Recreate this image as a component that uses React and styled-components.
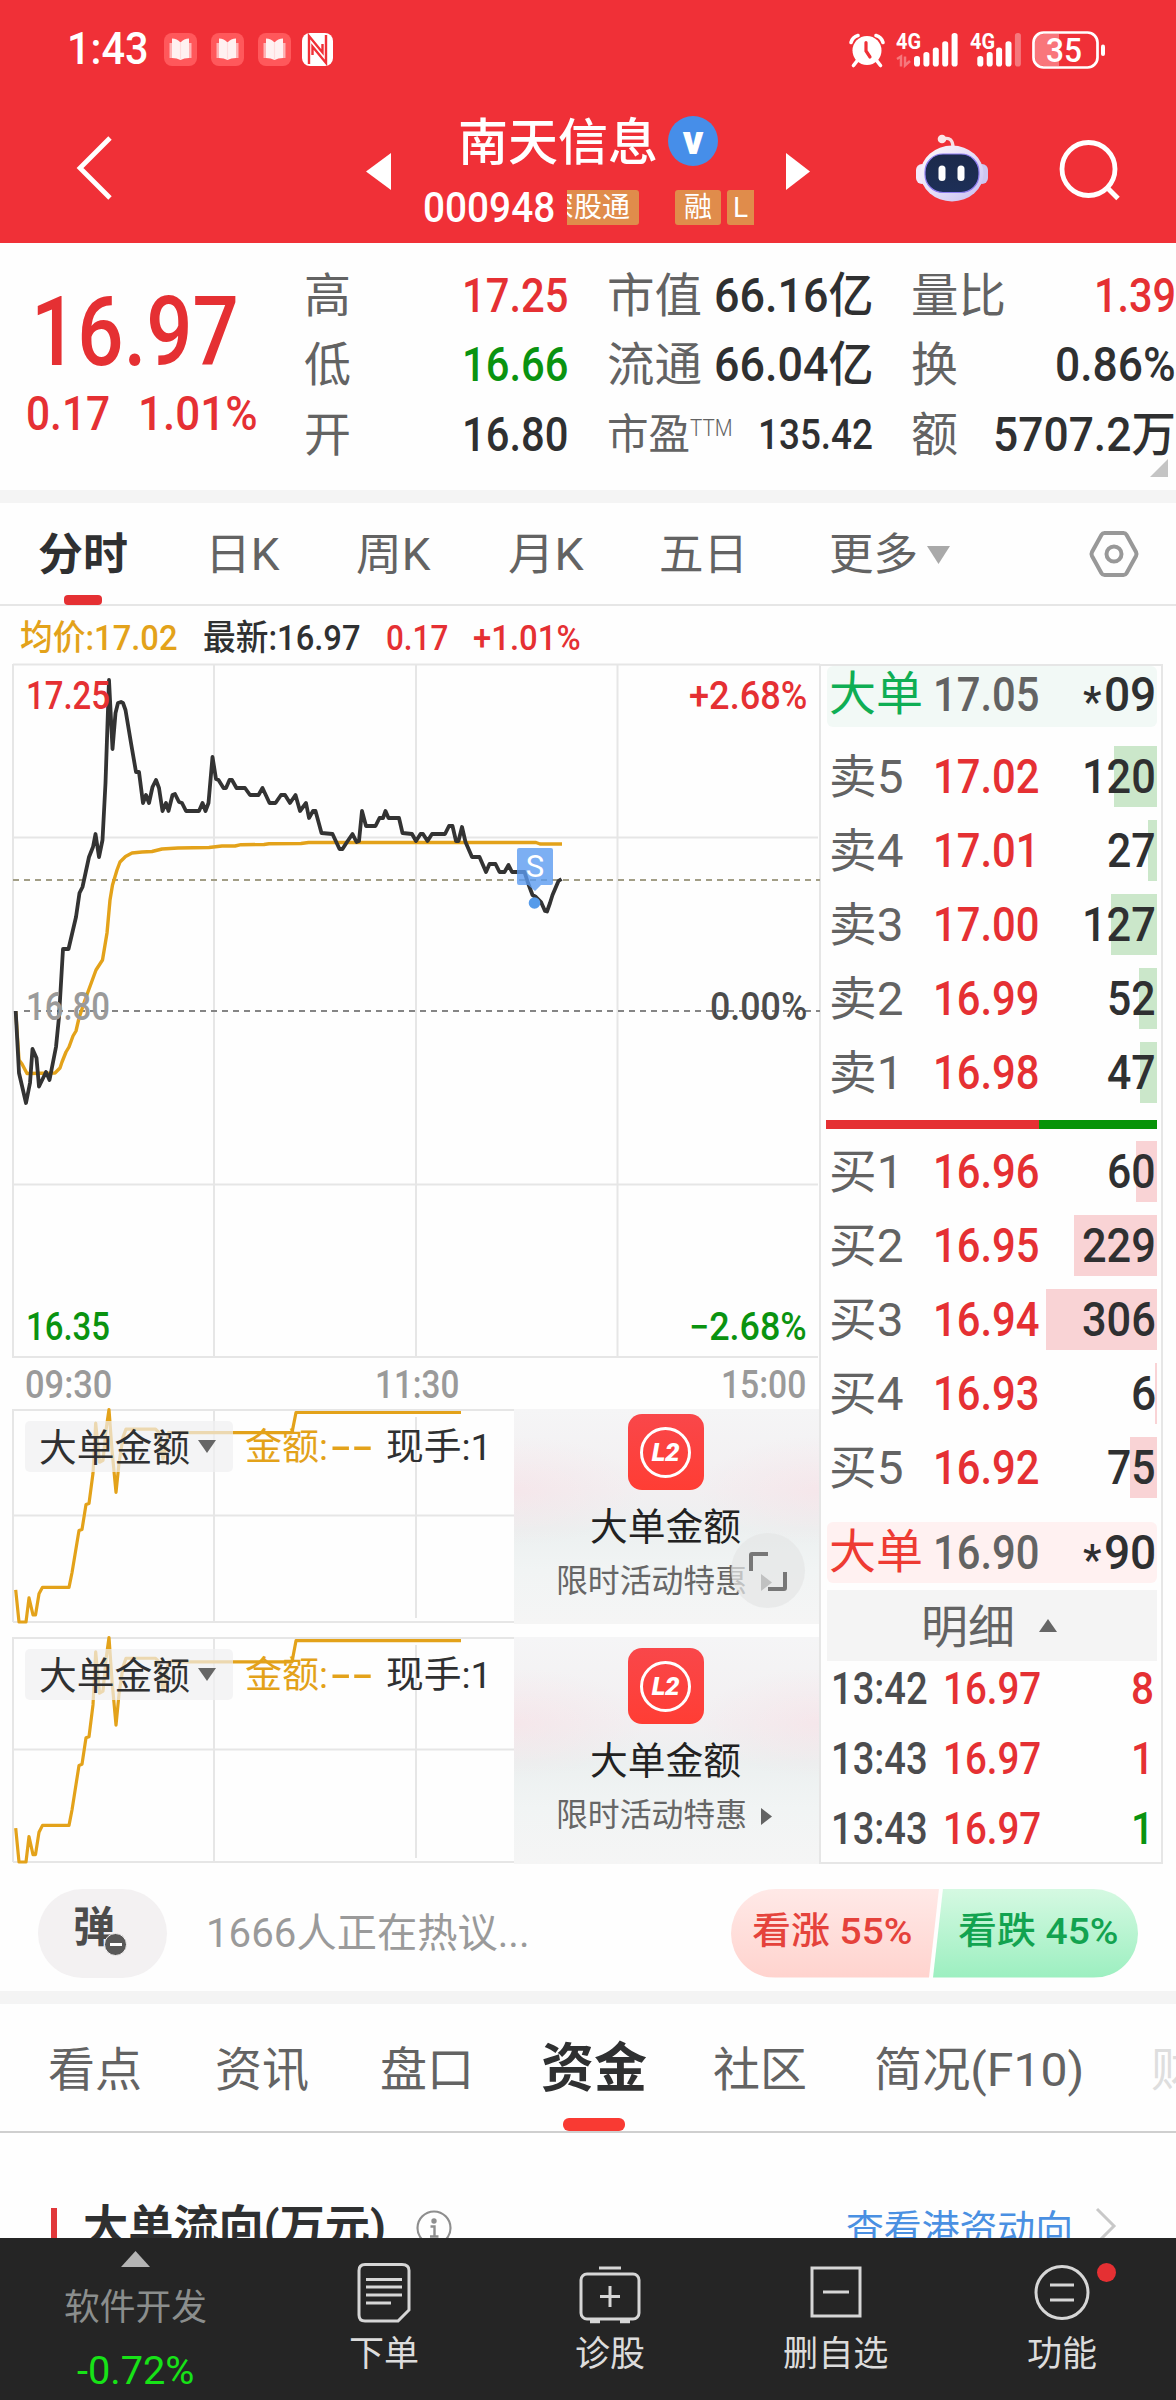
import React, { useLayoutEffect, useRef, useState } from "react";
import styled, { createGlobalStyle, css } from "styled-components";

const color = {
  brand: "#f03037",
  red: "#e53033",
  green: "#0a9310",
  gold: "#e3a21a",
  ink: "#2f3031",
  label: "#636363",
  muted: "#9a9a9a",
  line: "#e6e6e6",
  band: "#f4f4f4",
};

const fontStack = `Roboto, "Noto Sans CJK SC", sans-serif`;

const GlobalStyle = createGlobalStyle`
  * { box-sizing: border-box; }
  body { margin: 0; background: #fefefe; }
`;

const Screen = styled.div`
  display: flex;
  flex-direction: column;
  width: 1176px;
  height: 2400px;
  overflow: hidden;
  background: #fefefe;
  color: ${color.ink};
  font-family: ${fontStack};
`;

/* ---------- text that is condensed to a given width ---------- */

const FitBox = styled.span`
  display: block;
  flex: none;
  width: ${(p) => p.$w}px;
  height: ${(p) => p.$size * 1.2}px;
  line-height: ${(p) => p.$size * 1.2}px;
  font-size: ${(p) => p.$size}px;
  font-weight: ${(p) => p.$weight};
  color: ${(p) => p.$color || "inherit"};
  white-space: nowrap;
  ${(p) => p.$top && css`margin-top: ${p.$top}px;`}
  ${(p) => p.$left && css`margin-left: ${p.$left}px;`}
`;

const FitInner = styled.span`
  display: inline-block;
  transform-origin: 0 50%;
`;

function Fit({ w, size, weight = 400, tint, top, left, children }) {
  const ref = useRef(null);
  const [scale, setScale] = useState(1);
  useLayoutEffect(() => {
    setScale(w / ref.current.offsetWidth);
  }, [w, size, weight, children]);
  return (
    <FitBox $w={w} $size={size} $weight={weight} $color={tint} $top={top} $left={left}>
      <FitInner ref={ref} style={{ transform: `scaleX(${scale})` }}>{children}</FitInner>
    </FitBox>
  );
}

/* ---------- header ---------- */

const Header = styled.header`
  flex: none;
  height: 243px;
  background: ${color.brand};
  color: #fff;
`;

const StatusBar = styled.div`
  display: flex;
  align-items: center;
  height: 99px;
  padding: 0 70px 0 67px;
`;

const StatusIcons = styled.div`
  display: flex;
  align-items: center;
  gap: 14px;
  margin-left: 15px;
`;

const StatusRight = styled.div`
  display: flex;
  align-items: center;
  margin-left: auto;
`;

const TitleBar = styled.div`
  display: flex;
  align-items: center;
  height: 144px;
  padding: 0 57px 0 75px;
`;

const StockTitle = styled.div`
  display: flex;
  flex-direction: column;
  width: 331px;
  height: 144px;
  margin: 0 32px;
`;

const NameRow = styled.div`
  display: flex;
  align-items: center;
  height: 82px;
  padding: 2px 0 0 35px;
`;

const CodeRow = styled.div`
  display: flex;
  align-items: center;
  height: 52px;
`;

const Verified = styled.span`
  display: flex;
  align-items: center;
  justify-content: center;
  width: 50px;
  height: 50px;
  margin-left: 10px;
  border-radius: 50%;
  background: #468ee9;
  font-size: 40px;
  line-height: 50px;
  font-weight: 900;
`;

const Tag = styled.span`
  display: flex;
  justify-content: ${(p) => p.$align || "center"};
  flex: none;
  width: ${(p) => p.$w}px;
  height: 35px;
  margin-left: ${(p) => p.$gap}px;
  padding: ${(p) => p.$pad || "0"};
  border-radius: ${(p) => p.$radius || "3px"};
  overflow: hidden;
  background: #e08c4b;
  font-size: 28px;
  line-height: 36px;
  white-space: nowrap;
`;

const Icon = styled.svg`
  display: block;
  flex: none;
  margin-left: ${(p) => p.$left || 0}px;
  margin-top: ${(p) => p.$top || 0}px;
  overflow: visible;
  font-family: ${fontStack};
`;

const BookIcon = () => (
  <Icon width="33" height="33" viewBox="0 0 33 33">
    <rect width="33" height="33" rx="8" fill="#ff585b" />
    <path d="M5.500 10h22v15h-22z" fill="#ffb3b5" />
    <path d="M8 5.500q5 0 8.500 4q3.500-4 8.500-4v19.500q-5 0-8.500 2q-3.500-2-8.500-2z" fill="#fff1f1" />
    <path d="M16.500 9.500v17" stroke="#ffdcdd" strokeWidth="1.200" />
  </Icon>
);

const NfcIcon = () => (
  <Icon width="31" height="33" viewBox="0 0 31 33" $left={-3}>
    <rect width="31" height="33" rx="8" fill="#fff" />
    <path d="M7 31V3L20.500 19.500V11" fill="none" stroke={color.brand} strokeWidth="2.400" />
    <path d="M24 2v28L10.500 13.500V22" fill="none" stroke={color.brand} strokeWidth="2.400" />
  </Icon>
);

const AlarmIcon = () => (
  <Icon width="36" height="34" viewBox="0 0 36 34">
    <circle cx="18" cy="17.500" r="14.500" fill="#fff" />
    <path d="M2 9.500Q3.500 4 9 2.500M34 9.500Q32.500 4 27 2.500M8 28l-3.500 4.500M28 28l3.500 4.500" stroke="#fff" strokeWidth="3.600" strokeLinecap="round" fill="none" />
    <path d="M17 9.500v8.500l4 6" stroke={color.brand} strokeWidth="3.200" fill="none" strokeLinecap="round" />
  </Icon>
);

const barTops = [23, 19, 14.5, 8.3, 0];

function SignalIcon({ offset, width, faded, arrows, left }) {
  return (
    <Icon width={width} height="34" viewBox={`0 0 ${width} 34`} $left={left}>
      <text x="0" y="16.300" fontSize="22" fontWeight="700" textLength="25" lengthAdjust="spacingAndGlyphs" fill="#fff">4G</text>
      {arrows && <path d="M1 26l4-2.500v10M9 23.500v9l5-4.500" stroke="#fff" strokeOpacity=".35" strokeWidth="2.500" fill="none" />}
      {barTops.map((t, i) => (
        <rect key={t} x={offset + i * 9.4} y={t} width="6" height={33.6 - t} rx="2.800" fill="#fff" opacity={faded && i === 4 ? 0.35 : 1} />
      ))}
    </Icon>
  );
}

const BatteryIcon = () => (
  <Icon width="74" height="38" viewBox="0 0 74 38" $left={12}>
    <path d="M12 3H27V35H12Q3 35 3 26V12Q3 3 12 3z" fill="#f9767b" />
    <rect x="1.500" y="1.500" width="64" height="35" rx="10" fill="none" stroke="#fff" strokeWidth="2.700" />
    <rect x="69" y="13.500" width="4" height="11.500" rx="2" fill="#fff" />
    <text x="14" y="30.500" fontSize="33" fontWeight="500" textLength="36" lengthAdjust="spacingAndGlyphs" fill="#fff">35</text>
  </Icon>
);

const BackIcon = () => (
  <Icon width="38" height="66" viewBox="0 0 38 66" $top={-7}>
    <path d="M35 3L5 33L35 63" fill="none" stroke="#fff" strokeWidth="4.800" />
  </Icon>
);

const RobotIcon = () => (
  <Icon width="74" height="68" viewBox="0 0 74 68" $left={105} $top={-6}>
    <defs>
      <linearGradient id="robotHead" x1="0" y1="0" x2="1" y2="1">
        <stop offset="0" stopColor="#fffafa" />
        <stop offset=".5" stopColor="#e6dff8" />
        <stop offset="1" stopColor="#c5bdf2" />
      </linearGradient>
      <linearGradient id="robotFace" x1="0" y1="0" x2="0" y2="1">
        <stop offset="0" stopColor="#1c2a4a" />
        <stop offset="1" stopColor="#1d2f58" />
      </linearGradient>
    </defs>
    <path d="M28 5Q38 2 38 14" fill="none" stroke="#f7dfe4" strokeWidth="3.400" />
    <circle cx="27" cy="5" r="4.300" fill="#fbe6e8" />
    <rect x="1" y="30" width="12" height="20" rx="6" fill="#f3e8fb" />
    <rect x="61" y="30" width="12" height="20" rx="6" fill="#cdc6f0" />
    <ellipse cx="37" cy="39.500" rx="31.500" ry="28" fill="url(#robotHead)" />
    <rect x="10" y="20" width="54" height="38.500" rx="18" fill="url(#robotFace)" stroke="#8e7df0" strokeWidth="1.200" />
    <rect x="23.500" y="31.500" width="7" height="15.500" rx="3.500" fill="#fff" />
    <rect x="42.500" y="31.500" width="7" height="15.500" rx="3.500" fill="#fff" />
  </Icon>
);

const SearchIcon = () => (
  <Icon width="62" height="62" viewBox="0 0 62 62" $left={69}>
    <circle cx="30.500" cy="29" r="26.500" fill="none" stroke="#fff" strokeWidth="4.800" />
    <path d="M49 47.500L60 58.500" stroke="#fff" strokeWidth="5" />
  </Icon>
);

const Triangle = ({ w, h, dir, fill, left, top }) => {
  const d = {
    left: `M${w} 0V${h}L0 ${h / 2}z`,
    right: `M0 0V${h}L${w} ${h / 2}z`,
    up: `M0 ${h}H${w}L${w / 2} 0z`,
    down: `M0 0H${w}L${w / 2} ${h}z`,
    corner: `M0 ${h}H${w}V0z`,
  }[dir];
  return (
    <Icon width={w} height={h} viewBox={`0 0 ${w} ${h}`} $left={left} $top={top}>
      <path d={d} fill={fill} />
    </Icon>
  );
};

function TopHeader() {
  return (
    <Header>
      <StatusBar>
        <Fit w={82} size={44} weight={500}>1:43</Fit>
        <StatusIcons>
          <BookIcon />
          <BookIcon />
          <BookIcon />
          <NfcIcon />
        </StatusIcons>
        <StatusRight>
          <AlarmIcon />
          <SignalIcon left={11} width={62} offset={18} arrows />
          <SignalIcon left={12} width={50} offset={7.3} faded />
          <BatteryIcon />
        </StatusRight>
      </StatusBar>
      <TitleBar>
        <BackIcon />
        <Triangle w={25} h={37} dir="left" fill="#fff" left={253} />
        <StockTitle>
          <NameRow>
            <Fit w={200} size={50} weight={500} top={3}>南天信息</Fit>
            <Verified>v</Verified>
          </NameRow>
          <CodeRow>
            <Fit w={132} size={42} weight={500} top={2}>000948</Fit>
            <Tag $w={72} $gap={12} $align="flex-end" $pad="0 9px 0 0" $radius="0 3px 3px 0">深股通</Tag>
            <Tag $w={46} $gap={36}>融</Tag>
            <Tag $w={27} $gap={6} $radius="3px 0 0 3px">L</Tag>
          </CodeRow>
        </StockTitle>
        <Triangle w={24} h={37} dir="right" fill="#fff" />
        <RobotIcon />
        <SearchIcon />
      </TitleBar>
    </Header>
  );
}

/* ---------- quote summary ---------- */

const Quote = styled.section`
  display: flex;
  flex: none;
  height: 247px;
`;

const LastPrice = styled.div`
  width: 304px;
  padding: 32px 0 0 26px;
  color: ${color.red};
`;

const Change = styled.div`
  display: flex;
  gap: 28px;
  margin-top: -5px;
`;

const StatColumn = styled.div`
  width: ${(p) => p.$w}px;
  margin-right: ${(p) => p.$gap}px;
  padding-top: 18px;
`;

const StatRow = styled.div`
  display: flex;
  align-items: center;
  justify-content: space-between;
  height: 69.500px;
`;

const Superscript = styled.span`
  display: flex;
  align-self: flex-start;
  margin: 15px auto 0 0;
`;

const Corner = styled.div`
  display: flex;
  justify-content: flex-end;
  padding-right: 8px;
  margin-top: 4px;
`;

const Band = styled.div`
  flex: none;
  height: 13px;
  background: ${color.band};
`;

function QuoteSummary() {
  const { red, green, ink, label } = color;
  return (
    <Quote>
      <LastPrice>
        <Fit w={208} size={96} weight={500} left={5}>16.97</Fit>
        <Change>
          <Fit w={84} size={48} weight={500}>0.17</Fit>
          <Fit w={120} size={48} weight={500}>1.01%</Fit>
        </Change>
      </LastPrice>
      <StatColumn $w={264} $gap={39}>
        <StatRow><Fit w={47} size={47} tint={label}>高</Fit><Fit w={106} size={48} weight={500} tint={red}>17.25</Fit></StatRow>
        <StatRow><Fit w={47} size={47} tint={label}>低</Fit><Fit w={106} size={48} weight={500} tint={green}>16.66</Fit></StatRow>
        <StatRow><Fit w={47} size={47} tint={label}>开</Fit><Fit w={106} size={48} weight={500} tint={ink}>16.80</Fit></StatRow>
      </StatColumn>
      <StatColumn $w={266} $gap={38}>
        <StatRow><Fit w={95} size={47} tint={label}>市值</Fit><Fit w={159} size={48} weight={500} tint={ink}>66.16亿</Fit></StatRow>
        <StatRow><Fit w={95} size={47} tint={label}>流通</Fit><Fit w={159} size={48} weight={500} tint={ink}>66.04亿</Fit></StatRow>
        <StatRow>
          <Fit w={83} size={42} tint={label}>市盈</Fit>
          <Superscript><Fit w={43} size={23} weight={300} tint={label}>TTM</Fit></Superscript>
          <Fit w={115} size={42} weight={500} tint={ink}>135.42</Fit>
        </StatRow>
      </StatColumn>
      <StatColumn $w={265} $gap={0}>
        <StatRow><Fit w={95} size={47} tint={label}>量比</Fit><Fit w={82} size={48} weight={500} tint={red}>1.39</Fit></StatRow>
        <StatRow><Fit w={47} size={47} tint={label}>换</Fit><Fit w={121} size={48} weight={500} tint={ink}>0.86%</Fit></StatRow>
        <StatRow><Fit w={47} size={47} tint={label}>额</Fit><Fit w={183} size={48} weight={500} tint={ink}>5707.2万</Fit></StatRow>
        <Corner><Triangle w={18} h={18} dir="corner" fill="#c4c4c4" top={-15} /></Corner>
      </StatColumn>
    </Quote>
  );
}

/* ---------- period tabs ---------- */

const PeriodTabs = styled.nav`
  display: flex;
  align-items: center;
  flex: none;
  height: 103px;
  padding: 0 36px 0 38px;
  border-bottom: 2px solid ${color.line};
`;

const PeriodTab = styled.div`
  position: relative;
  display: flex;
  align-items: center;
  height: 101px;
  padding-top: 4px;
  margin-right: ${(p) => p.$gap}px;
  color: ${(p) => (p.$active ? color.ink : color.label)};
  ${(p) => p.$active && css`
    &::after {
      content: "";
      position: absolute;
      left: 26px;
      bottom: -1px;
      width: 38px;
      height: 10px;
      border-radius: 4px;
      background: ${color.red};
    }
  `}
`;

const HexIcon = () => (
  <Icon width="50" height="48" viewBox="0 0 50 48" $left={139} $top={1}>
    <path d="M15.500 3H34.500Q36.500 3 37.500 4.700L47 22Q48 24 47 26L37.500 43.300Q36.500 45 34.500 45H15.500Q13.500 45 12.500 43.300L3 26Q2 24 3 22L12.500 4.700Q13.500 3 15.500 3z" fill="none" stroke="#989898" strokeWidth="4" />
    <circle cx="25" cy="24" r="7.500" fill="none" stroke="#989898" strokeWidth="4" />
  </Icon>
);

function Periods() {
  return (
    <PeriodTabs>
      <PeriodTab $active $gap={77}><Fit w={90} size={44} weight={700}>分时</Fit></PeriodTab>
      <PeriodTab $gap={76}><Fit w={75} size={44}>日K</Fit></PeriodTab>
      <PeriodTab $gap={77}><Fit w={75} size={44}>周K</Fit></PeriodTab>
      <PeriodTab $gap={75}><Fit w={76} size={44}>月K</Fit></PeriodTab>
      <PeriodTab $gap={81}><Fit w={89} size={44}>五日</Fit></PeriodTab>
      <PeriodTab $gap={0}>
        <Fit w={89} size={44}>更多</Fit>
        <Triangle w={23} h={18} dir="down" fill="#a9a9a9" left={9} top={-2} />
      </PeriodTab>
      <HexIcon />
    </PeriodTabs>
  );
}

/* ---------- charts ---------- */

const Main = styled.main`
  display: flex;
  flex: none;
  height: 1258px;
`;

const ChartColumn = styled.div`
  width: 820px;
`;

const Legend = styled.div`
  display: flex;
  align-items: center;
  gap: 25px;
  height: 58px;
  padding: 8px 0 0 20px;
`;

const ChartArea = styled.div`
  position: relative;
  height: 694px;
`;

const AxisRow = styled.div`
  position: absolute;
  left: 26px;
  right: 13px;
  top: ${(p) => p.$y}px;
  display: flex;
  justify-content: space-between;
`;

const TimeAxis = styled.div`
  display: flex;
  align-items: center;
  justify-content: space-between;
  height: 51px;
  padding: 5px 14px 0 25px;
`;

const pricePoints = [
  [15.7, 1011], [19, 1073], [26, 1103], [30, 1083], [32.5, 1049], [36.5, 1058], [39, 1086.5], [46, 1072], [49.5, 1080],
  [56, 1047], [59, 1017], [63, 949], [68.5, 949], [76, 917], [79.5, 893], [82.5, 887], [89, 857], [93, 847], [95.5, 834],
  [99, 857], [102.5, 840], [105.5, 783], [109, 680], [112.5, 749], [115.5, 713], [118, 703], [121, 702], [123, 703],
  [125.5, 710], [131, 743], [136, 772], [139, 772], [143, 803], [146, 795], [149, 803], [152.5, 787], [156, 780],
  [159, 788], [162.5, 811], [166, 803], [168.5, 811], [172.5, 795], [175, 794], [179, 802], [182, 803], [186, 811],
  [199, 811], [202.5, 803], [205.5, 811], [208.5, 803], [212.5, 757], [216, 779], [218.5, 780], [223.5, 788], [226, 788],
  [229.5, 780], [232, 780], [236.5, 788], [245, 788], [250, 795], [258.5, 795], [262.5, 788], [269.5, 803], [275.5, 803],
  [281, 795], [285, 795], [290, 803], [295.5, 795], [300, 811], [306, 803], [309, 818], [313, 811], [315.5, 811],
  [321.5, 833], [332.5, 834], [339.5, 849], [342.5, 849], [347, 842], [352.5, 834], [356.5, 842], [359, 841], [362, 811],
  [366, 826], [375.5, 826], [379.5, 818], [383, 818], [385.5, 811], [388.5, 818], [399, 818], [402.5, 833], [412, 834],
  [416, 841], [420.5, 834], [423, 834], [427.5, 841], [432, 834], [445, 834], [449, 826], [452.5, 826], [456, 841],
  [458.5, 841], [462, 827], [465.5, 842], [472, 857], [479.5, 857], [486, 872], [489.5, 864], [495.5, 864], [499.5, 872],
  [504.5, 872], [508.5, 865], [512, 872], [524.5, 872], [528, 883], [532.5, 895], [536, 897], [541, 902], [545, 911],
  [547, 911.5], [550, 903], [552.5, 895], [558.5, 881], [561.5, 879],
];

const averagePoints = [
  [15.7, 1011], [19, 1060], [22, 1064], [27, 1073.5], [55, 1073], [60, 1068], [62, 1062], [66, 1052], [69, 1047],
  [73, 1036], [76, 1031], [79, 1018], [85, 1000], [96, 970], [102.5, 960], [107, 933], [110, 900], [112.5, 885],
  [117, 870], [120, 862], [125.5, 856.5], [132, 853], [142, 852], [152, 851.5], [162, 849], [178, 848], [209, 847.5],
  [222, 846], [235, 846], [241, 844.7], [264, 844.5], [269, 843.7], [301, 843.5], [308.5, 842.5], [536, 842.5],
  [540, 844], [562, 844],
];

const amountPoints = [
  [15.7, 180], [19, 212], [26, 212], [29, 188], [33, 205], [35.5, 205], [39, 184], [42.5, 177.5], [69, 177.5], [72, 163],
  [79, 121], [82, 120], [86, 95], [89, 94], [93, 64], [95.7, 14], [99.5, 53], [103, 51], [106, 21], [109, 0.5],
  [112, 41], [116, 83], [119, 54], [123, 28], [126, 20], [155.5, 20], [158.5, 23], [163, 50], [168.5, 23.5], [292, 23.5],
  [296, 3.5], [461, 3.5],
];

const toPolyline = (pts, sy = 1, dy = 0) => pts.map(([x, y]) => `${x},${(y + dy) * sy}`).join(" ");

function PriceChart() {
  return (
    <Icon width="820" height="694" viewBox="0 664 820 694">
      <g stroke={color.line} strokeWidth="2">
        <path d="M13 664.500H820M13 837.500H818M13 1184.500H818M13 1357H818" />
        <path d="M13 664V1358M214 664V1358M416 664V1358M617.500 664V1358" />
      </g>
      <path d="M13 880H820" stroke="#a29e86" strokeWidth="2" strokeDasharray="6 5" />
      <path d="M24 1011H820" stroke="#858585" strokeWidth="2" strokeDasharray="6 5" />
      <polyline points={toPolyline(averagePoints)} fill="none" stroke={color.gold} strokeWidth="3.400" strokeLinejoin="round" />
      <polyline points={toPolyline(pricePoints)} fill="none" stroke="#333" strokeWidth="3.800" strokeLinejoin="round" />
      <circle cx="534.500" cy="903" r="5.800" fill="#569bea" />
      <path d="M519 848H551Q553 848 553 850V883Q553 885 551 885H541L535 891L528 885H519Q517 885 517 883V850Q517 848 519 848z" fill="#5b9bf0" fillOpacity=".8" />
      <text x="535" y="877" fontSize="31" textAnchor="middle" fill="#fff">S</text>
    </Icon>
  );
}

/* ---------- indicator charts ---------- */

const SubPanel = styled.div`
  position: relative;
  display: flex;
  height: ${(p) => p.$h}px;
  margin-bottom: ${(p) => p.$gap}px;
`;

const SubLabels = styled.div`
  position: absolute;
  left: 25px;
  top: 12px;
  display: flex;
  align-items: center;
  height: 51px;
`;

const Pill = styled.div`
  display: flex;
  align-items: center;
  width: 208px;
  height: 51px;
  padding-left: 14px;
  margin-right: 12px;
  border-radius: 5px;
  background: rgba(240, 240, 241, 0.7);
`;

const Promo = styled.div`
  position: relative;
  display: flex;
  flex-direction: column;
  align-items: center;
  width: 305px;
  padding-top: ${(p) => p.$top}px;
  padding-right: 2px;
  background:
    radial-gradient(ellipse 120px 55px at 100% 38%, rgba(255, 205, 215, 0.25), transparent),
    radial-gradient(ellipse 130px 55px at 0% 38%, rgba(255, 205, 215, 0.25), transparent),
    linear-gradient(#f5f5f6, #f2eff1 38%, #ecf0f0 56%, #f1f4f4 75%, #f5f5f5);
`;

const Level2Badge = styled.div`
  display: flex;
  align-items: center;
  justify-content: center;
  width: 76px;
  height: 76px;
  margin-bottom: 15px;
  border-radius: 14px;
  background: linear-gradient(#f9474a, #ff3d34);
`;

const Level2Ring = styled.div`
  display: flex;
  align-items: center;
  justify-content: center;
  width: 51px;
  height: 51px;
  border: 3.500px solid #fff;
  border-radius: 50%;
  color: #fff;
  font-size: 26px;
  font-weight: 900;
  font-style: italic;
  line-height: 44px;
  letter-spacing: -0.5px;
`;

const PromoNote = styled.div`
  display: flex;
  align-items: center;
  margin: 12px 3px 0 0;
`;

const ExpandButton = styled.div`
  position: absolute;
  right: 14px;
  top: 124px;
  display: flex;
  align-items: center;
  justify-content: center;
  width: 74px;
  height: 75px;
  border-radius: 50%;
  background: rgba(228, 230, 230, 0.72);
`;

function IndicatorPanel({ height, gap, promoTop, expandable }) {
  const plot = height - 2;
  return (
    <SubPanel $h={height} $gap={gap}>
      <Icon width="514" height={height} viewBox={`0 0 514 ${height}`}>
        <g stroke={color.line} strokeWidth="2">
          <path d={`M13 1H514M13 ${plot / 2}H514M13 ${plot}H514`} />
          <path d={`M13 0V${plot}M214 0V${plot}M416 8V${plot - 4}`} />
        </g>
        <polyline points={toPolyline(amountPoints, plot / 212, 0)} fill="none" stroke={color.gold} strokeWidth="3.200" strokeLinejoin="round" />
      </Icon>
      <Promo $top={promoTop}>
        <Level2Badge><Level2Ring>L2</Level2Ring></Level2Badge>
        <Fit w={151} size={37.500} tint="#222">大单金额</Fit>
        <PromoNote>
          <Fit w={191} size={32} tint="#666">限时活动特惠</Fit>
          <Triangle w={11} h={17} dir="right" fill="#636363" left={14} top={3} />
        </PromoNote>
        {expandable && (
          <ExpandButton>
            <Icon width="40" height="40" viewBox="0 0 40 40">
              <path d="M3 20V4Q3 3 4 3H20M37 21V37Q37 38 36 38H20" fill="none" stroke="#777" strokeWidth="4" />
            </Icon>
          </ExpandButton>
        )}
      </Promo>
      <SubLabels>
        <Pill>
          <Fit w={151} size={37.500} top={4}>大单金额</Fit>
          <Triangle w={18} h={13} dir="down" fill="#666" left={8} />
        </Pill>
        <Fit w={83} size={37} tint={color.gold} top={4}>金额:</Fit>
        <Fit w={43} size={37} weight={500} tint={color.gold} top={4} left={2}>--</Fit>
        <Fit w={106} size={37} left={13} top={4}>现手:1</Fit>
      </SubLabels>
    </SubPanel>
  );
}

function Charts() {
  const { gold, red, ink, green, muted } = color;
  return (
    <ChartColumn>
      <Legend>
        <Fit w={158} size={35} weight={500} tint={gold}>均价:17.02</Fit>
        <Fit w={158} size={35} weight={500} tint={ink}>最新:16.97</Fit>
        <Fit w={62} size={35} weight={500} tint={red}>0.17</Fit>
        <Fit w={108} size={35} weight={500} tint={red}>+1.01%</Fit>
      </Legend>
      <ChartArea>
        <PriceChart />
        <AxisRow $y={10}><Fit w={84} size={38} weight={500} tint={red}>17.25</Fit><Fit w={118} size={38} weight={500} tint={red}>+2.68%</Fit></AxisRow>
        <AxisRow $y={321}><Fit w={84} size={38} weight={500} tint={muted}>16.80</Fit><Fit w={97} size={38} weight={500} tint="#4c4c4c">0.00%</Fit></AxisRow>
        <AxisRow $y={641}><Fit w={84} size={38} weight={500} tint={green}>16.35</Fit><Fit w={118} size={38} weight={500} tint={green}>−2.68%</Fit></AxisRow>
      </ChartArea>
      <TimeAxis>
        <Fit w={87} size={38} weight={500} tint={muted}>09:30</Fit>
        <Fit w={84} size={38} weight={500} tint={muted}>11:30</Fit>
        <Fit w={85} size={38} weight={500} tint={muted}>15:00</Fit>
      </TimeAxis>
      <IndicatorPanel height={215} gap={13} promoTop={5} expandable />
      <IndicatorPanel height={227} gap={0} promoTop={11} />
    </ChartColumn>
  );
}

/* ---------- order book ---------- */

const Book = styled.aside`
  width: 344px;
  margin: 58px 0 0 -1px;
  padding: 0 4px 0 6px;
  border: 2px solid ${color.line};
`;

const BookRow = styled.div`
  position: relative;
  display: flex;
  align-items: center;
  height: 74px;
  padding: 0 1px 0 2px;
`;

const DepthBar = styled.div`
  position: absolute;
  right: 0;
  top: 6px;
  height: 61px;
  background: ${(p) => (p.$side === "sell" ? "#cbe7ca" : "#f9d3d5")};
`;

const Right = styled.div`
  position: relative;
  margin-left: auto;
`;

const Masked = styled.span`
  position: relative;
  top: 0.12em;
  padding-right: 0.06em;
  font-size: 0.9em;
`;

const BigOrder = styled(BookRow)`
  height: 61px;
  margin-top: ${(p) => p.$top}px;
  margin-bottom: ${(p) => p.$bottom}px;
  padding-bottom: ${(p) => p.$lift}px;
  border-radius: 6px;
  background: ${(p) => (p.$side === "sell" ? "#f2f9f6" : "#fff1f1")};
`;

const Ratio = styled.div`
  display: flex;
  height: 9px;
  margin: 10px 0 6px -1px;
  background: linear-gradient(90deg, ${color.red} 64.4%, #079308 64.4%);
`;

const DetailBar = styled.div`
  display: flex;
  align-items: center;
  height: 71px;
  padding-left: 94px;
  background: #f4f4f4;
`;

const Trades = styled.div`
  display: flex;
  flex-direction: column;
  gap: 20px;
  padding-top: 3px;
`;

const Trade = styled.div`
  display: flex;
  align-items: center;
  height: 50px;
  padding: 0 3px 0 4px;
`;

const sells = [
  ["卖5", "17.02", 120, 43], ["卖4", "17.01", 27, 9], ["卖3", "17.00", 127, 46], ["卖2", "16.99", 52, 18], ["卖1", "16.98", 47, 17],
];
const buys = [
  ["买1", "16.96", 60, 21], ["买2", "16.95", 229, 83], ["买3", "16.94", 306, 111], ["买4", "16.93", 6, 2], ["买5", "16.92", 75, 27],
];
const trades = [["13:42", "16.97", "8", "up"], ["13:43", "16.97", "1", "up"], ["13:43", "16.97", "1", "down"]];

const quantityWidth = (q) => ({ 1: 25, 2: 49, 3: 74 }[String(q).length]);

const Level = ({ row: [name, price, qty, bar], side }) => (
  <BookRow>
    <DepthBar $side={side} style={{ width: bar }} />
    <Fit w={74} size={47} tint={color.label}>{name}</Fit>
    <Fit w={106} size={48} weight={500} tint={color.red} left={30}>{price}</Fit>
    <Right><Fit w={quantityWidth(qty)} size={48} weight={500}>{qty}</Fit></Right>
  </BookRow>
);

const BigOrderRow = ({ side, top, bottom, lift, tint, price, tail }) => (
  <BigOrder $side={side} $top={top} $bottom={bottom} $lift={lift}>
    <Fit w={94} size={47} tint={tint}>大单</Fit>
    <Fit w={106} size={48} weight={500} tint={color.label} left={10}>{price}</Fit>
    <Right><Fit w={73} size={48} weight={500}><Masked>*</Masked>{tail}</Fit></Right>
  </BigOrder>
);

function OrderBook() {
  return (
    <Book>
      <BigOrderRow side="sell" top={0} bottom={13} lift={4} tint="#0fae54" price="17.05" tail="09" />
      {sells.map((r) => <Level key={r[0]} row={r} side="sell" />)}
      <Ratio />
      {buys.map((r) => <Level key={r[0]} row={r} side="buy" />)}
      <BigOrderRow side="buy" top={17} bottom={7} lift={0} tint="#ee3b33" price="16.90" tail="90" />
      <DetailBar>
        <Fit w={94} size={46} tint={color.label} top={4}>明细</Fit>
        <Triangle w={18} h={13} dir="up" fill="#666" left={24} />
      </DetailBar>
      <Trades>
        {trades.map(([time, price, qty, dir], i) => (
          <Trade key={i}>
            <Fit w={97} size={44} weight={500} tint="#4b4c4e">{time}</Fit>
            <Fit w={98} size={44} weight={500} tint={color.red} left={15}>{price}</Fit>
            <Right><Fit w={23} size={44} weight={500} tint={dir === "up" ? color.red : color.green}>{qty}</Fit></Right>
          </Trade>
        ))}
      </Trades>
    </Book>
  );
}

/* ---------- discussion and sentiment ---------- */

const Discussion = styled.section`
  display: flex;
  align-items: center;
  flex: none;
  height: 127px;
  padding: 11px 38px 13px 38px;
`;

const BulletButton = styled.div`
  position: relative;
  width: 129px;
  height: 89px;
  padding: 14px 0 0 35px;
  margin-right: 39px;
  margin-top: 13px;
  border-radius: 45px;
  background: #f3f1f2;
`;

const MinusDot = styled.span`
  position: absolute;
  left: 66px;
  top: 44px;
  width: 23px;
  height: 23px;
  border: 1.500px solid #f3f1f2;
  border-radius: 50%;
  background: linear-gradient(#fff, #fff) center / 12px 3px no-repeat, #595959;
`;

const Sentiment = styled.div`
  display: flex;
  width: 407px;
  height: 89px;
  margin: 13px 0 0 auto;
`;

const Side = styled.div`
  display: flex;
  align-items: center;
  width: ${(p) => p.$w}px;
  padding-bottom: 1px;
  padding-left: ${(p) => (p.$up ? 21 : 25)}px;
  margin-left: ${(p) => (p.$up ? 0 : -6)}px;
  border-radius: ${(p) => (p.$up ? "45px 0 0 45px" : "0 45px 45px 0")};
  background: ${(p) => (p.$up ? "linear-gradient(#ffe9e7, #ffd3ce)" : "linear-gradient(#d5f9e2, #9cefc0)")};
  clip-path: ${(p) => (p.$up ? "polygon(0 0, 100% 0, calc(100% - 10px) 100%, 0 100%)" : "polygon(10px 0, 100% 0, 100% 100%, 0 100%)")};
`;

function DiscussionBar() {
  return (
    <Discussion>
      <BulletButton>
        <Fit w={42} size={42} weight={700} tint="#4c4c4c">弹</Fit>
        <MinusDot />
      </BulletButton>
      <Fit w={324} size={40} tint={color.muted} top={14}>1666人正在热议...</Fit>
      <Sentiment>
        <Side $up $w={208}><Fit w={161} size={37} weight={500} tint="#e5423b">看涨 55%</Fit></Side>
        <Side $w={205}><Fit w={161} size={37} weight={500} tint="#12a350">看跌 45%</Fit></Side>
      </Sentiment>
    </Discussion>
  );
}

/* ---------- content tabs ---------- */

const ContentTabs = styled.nav`
  display: flex;
  align-items: center;
  flex: none;
  height: 129px;
  padding-left: 48px;
  border-bottom: 2px solid #cfcfcf;
  overflow: hidden;
`;

const ContentTab = styled.div`
  position: relative;
  display: flex;
  align-items: center;
  flex: none;
  height: 127px;
  padding-top: 5px;
  margin-right: ${(p) => p.$gap}px;
  color: ${(p) => (p.$active ? color.ink : p.$faded ? "#dedede" : color.label)};
  ${(p) => p.$active && css`
    &::after {
      content: "";
      position: absolute;
      left: 22px;
      bottom: 0;
      width: 62px;
      height: 13px;
      border-radius: 6px;
      background: #f93a33;
    }
  `}
`;

const FlowSection = styled.section`
  display: flex;
  align-items: flex-start;
  flex: none;
  height: 105px;
  padding: 68px 58px 0 51px;
  overflow: hidden;
`;

const Accent = styled.span`
  width: 6px;
  height: 42px;
  margin: 7px 26px 0 0;
  background: #e1383a;
`;

const LinkGroup = styled.div`
  display: flex;
  margin-left: auto;
  padding-top: 6px;
`;

const InfoIcon = () => (
  <Icon width="38" height="38" viewBox="0 0 38 38" $left={29} $top={8}>
    <circle cx="19" cy="19" r="16.500" fill="none" stroke="#8e8e8e" strokeWidth="2.200" />
    <circle cx="19" cy="12" r="2.700" fill="#8e8e8e" />
    <path d="M15.500 17.500H19.500V27M15 27.500H23.500" fill="none" stroke="#8e8e8e" strokeWidth="2.400" />
  </Icon>
);

/* ---------- bottom toolbar ---------- */

const Toolbar = styled.footer`
  display: flex;
  flex: none;
  height: 162px;
  background: #252525;
  color: #dcdcdc;
`;

const Sector = styled.div`
  display: flex;
  flex-direction: column;
  align-items: center;
  width: 271px;
  padding-top: 13px;
`;

const Tool = styled.div`
  position: relative;
  display: flex;
  flex-direction: column;
  align-items: center;
  width: 226px;
  padding-top: 24px;
`;

const AlertDot = styled.span`
  position: absolute;
  right: 59px;
  top: 25px;
  width: 19px;
  height: 19px;
  border-radius: 50%;
  background: #e53033;
`;

const toolIcons = {
  order: (
    <>
      <path d="M9 2.500H46Q53 2.500 53 8.500V48L42 59H9Q3 59 3 53V8.500Q3 2.500 9 2.500z" />
      <path d="M10 17.500H46M10 25H46M10 33H46M10 41H35" />
    </>
  ),
  diagnose: (
    <>
      <rect x="-1" y="12" width="58" height="45" rx="6" />
      <path d="M17 6H39M28 24V45M18 34.500H38" />
      <path d="M8 59.500H18M38 59.500H48" strokeWidth="3.500" />
    </>
  ),
  remove: (
    <>
      <rect x="4" y="6" width="48" height="48" />
      <path d="M15 30H41" />
    </>
  ),
  menu: (
    <>
      <circle cx="28" cy="30.500" r="26" />
      <path d="M16 23H40M16 38H40" />
    </>
  ),
};

const tools = [["order", "下单", 70], ["diagnose", "诊股", 70], ["remove", "删自选", 106], ["menu", "功能", 70]];

function BottomBar() {
  return (
    <Toolbar>
      <Sector>
        <Triangle w={29} h={16} dir="up" fill="#b4b4b4" />
        <Fit w={143} size={36} tint="#8b8e8d" top={20} left={-1}>软件开发</Fit>
        <Fit w={117} size={38} tint="#17e317" top={19}>-0.72%</Fit>
      </Sector>
      {tools.map(([icon, name, w]) => (
        <Tool key={icon}>
          <Icon width="56" height="62" viewBox="0 0 56 62" fill="none" stroke="#d6d6d6" strokeWidth="3">
            {toolIcons[icon]}
          </Icon>
          <Fit w={w} size={35.500} top={9}>{name}</Fit>
          {icon === "menu" && <AlertDot />}
        </Tool>
      ))}
    </Toolbar>
  );
}

export default function App() {
  return (
    <Screen>
      <GlobalStyle />
      <TopHeader />
      <QuoteSummary />
      <Band />
      <Periods />
      <Main>
        <Charts />
        <OrderBook />
      </Main>
      <DiscussionBar />
      <Band />
      <ContentTabs>
        <ContentTab $gap={73}><Fit w={94} size={47}>看点</Fit></ContentTab>
        <ContentTab $gap={71}><Fit w={94} size={47}>资讯</Fit></ContentTab>
        <ContentTab $gap={67}><Fit w={94} size={47}>盘口</Fit></ContentTab>
        <ContentTab $active $gap={66}><Fit w={106} size={53} weight={700}>资金</Fit></ContentTab>
        <ContentTab $gap={67}><Fit w={94} size={47}>社区</Fit></ContentTab>
        <ContentTab $gap={67}><Fit w={210} size={47}>简况(F10)</Fit></ContentTab>
        <ContentTab $gap={0} $faded><Fit w={47} size={47}>财</Fit></ContentTab>
      </ContentTabs>
      <FlowSection>
        <Accent />
        <Fit w={303} size={44} weight={700}>大单流向(万元)</Fit>
        <InfoIcon />
        <LinkGroup>
          <Fit w={227} size={38} tint="#4a90e2">查看港资动向</Fit>
          <Icon width="24" height="40" viewBox="0 0 24 40" $left={21} $top={-1}>
            <path d="M3 3L20 20L3 37" fill="none" stroke="#c8c8c8" strokeWidth="3" />
          </Icon>
        </LinkGroup>
      </FlowSection>
      <BottomBar />
    </Screen>
  );
}
